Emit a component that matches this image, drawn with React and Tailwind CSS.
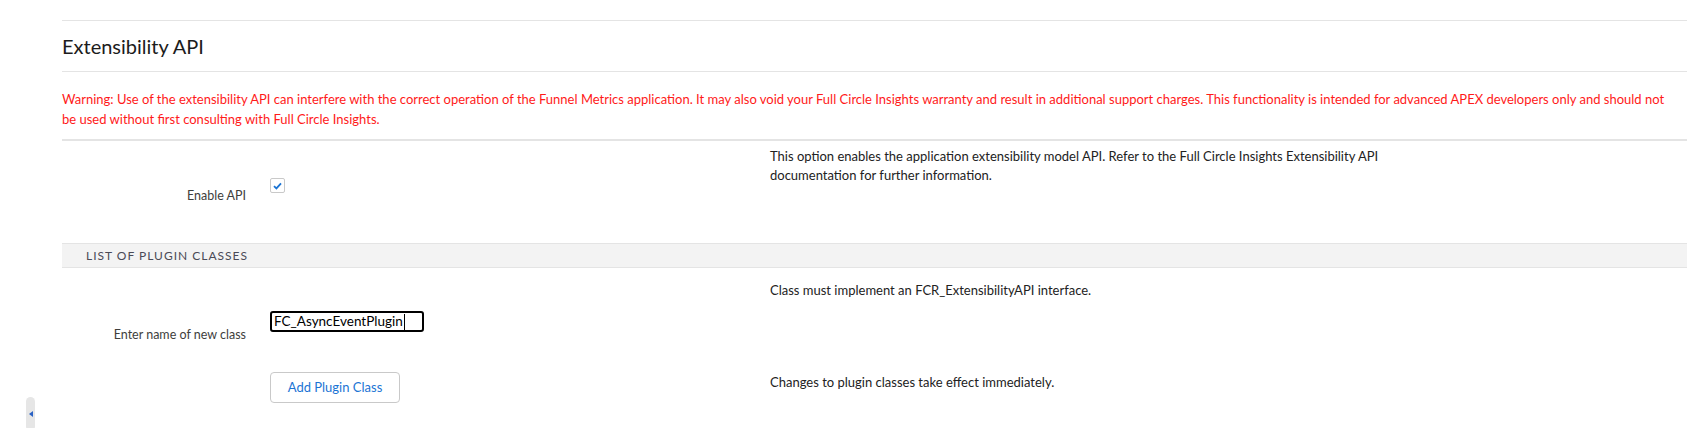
export default function App() {
  return (
    <div className="relative min-h-screen bg-white font-['Lato',sans-serif] text-[13px]">
      <div className="pl-[62px] pt-5">
        <div className="border-t border-[#e4e4e4]">
          <h1 className="flex h-[51px] items-center border-b border-[#e4e4e4] text-[20px] font-normal text-[#1c1c1c]">
            Extensibility API
          </h1>
          <p className="pb-[10px] pr-3 pt-[17px] leading-5 text-[#ff1a1a]">
            Warning: Use of the extensibility API can interfere with the correct operation of the Funnel Metrics application. It may also void your Full Circle Insights warranty and result in additional support charges. This functionality is intended for advanced APEX developers only and should not be used without first consulting with Full Circle Insights.
          </p>
        </div>

        <div className="grid h-[93px] grid-cols-[184px_524px_1fr] border-t-2 border-[#e4e4e4]">
          <div className="pt-[45px] text-right text-[12.5px] leading-5 text-[#3e3e3c]">Enable API</div>
          <div className="pl-6 pt-[37px]">
            <span className="flex h-[15px] w-[15px] items-center justify-center rounded-[2px] border border-[#c9c9c9] bg-white">
              <svg width="9" height="8" viewBox="0 0 9 8">
                <path d="M1 4.2 L3.4 6.4 L8 1.4" fill="none" stroke="#1b74d4" strokeWidth="1.8" />
              </svg>
            </span>
          </div>
          <div className="max-w-[640px] pt-[6px] leading-[19px] text-[#222]">
            This option enables the application extensibility model API. Refer to the Full Circle Insights Extensibility API documentation for further information.
          </div>
        </div>

        <div className="mt-[11px] border-t border-[#e4e4e4]">
          <div className="flex h-[24px] items-center border-b border-[#e4e4e4] bg-[#f3f3f3] pl-6 text-[12px] uppercase tracking-[1px] text-[#4a4a56]">
            List of plugin classes
          </div>
        </div>

        <div className="grid h-[90px] grid-cols-[184px_524px_1fr]">
          <div className="pt-[57px] text-right text-[12.5px] leading-5 text-[#3e3e3c]">Enter name of new class</div>
          <div className="pl-6 pt-[43px]">
            <div className="flex h-[21px] w-[154px] items-center rounded-[3px] border-2 border-black pl-[2px] text-[13.5px] text-black">
              <span>FC_AsyncEventPlugin</span>
              <span className="ml-px h-[16px] w-px bg-black" />
            </div>
          </div>
          <div className="pt-3 leading-5 text-[#222]">Class must implement an FCR_ExtensibilityAPI interface.</div>
        </div>

        <div className="grid grid-cols-[184px_524px_1fr]">
          <div />
          <div className="pl-6 pt-[14px]">
            <button className="h-[31px] w-[130px] rounded-[4px] border border-[#c9c9c9] bg-white text-[13px] text-[#1b74d4]">
              Add Plugin Class
            </button>
          </div>
          <div className="pt-[14px] leading-5 text-[#222]">Changes to plugin classes take effect immediately.</div>
        </div>
      </div>

      <div className="absolute left-[26px] top-[397px] flex h-[34px] w-[9px] items-center justify-center rounded-full bg-[#e6e6e6]">
        <span className="h-0 w-0 border-y-[3px] border-r-[4px] border-y-transparent border-r-[#2a62c4]" />
      </div>
    </div>
  )
}
